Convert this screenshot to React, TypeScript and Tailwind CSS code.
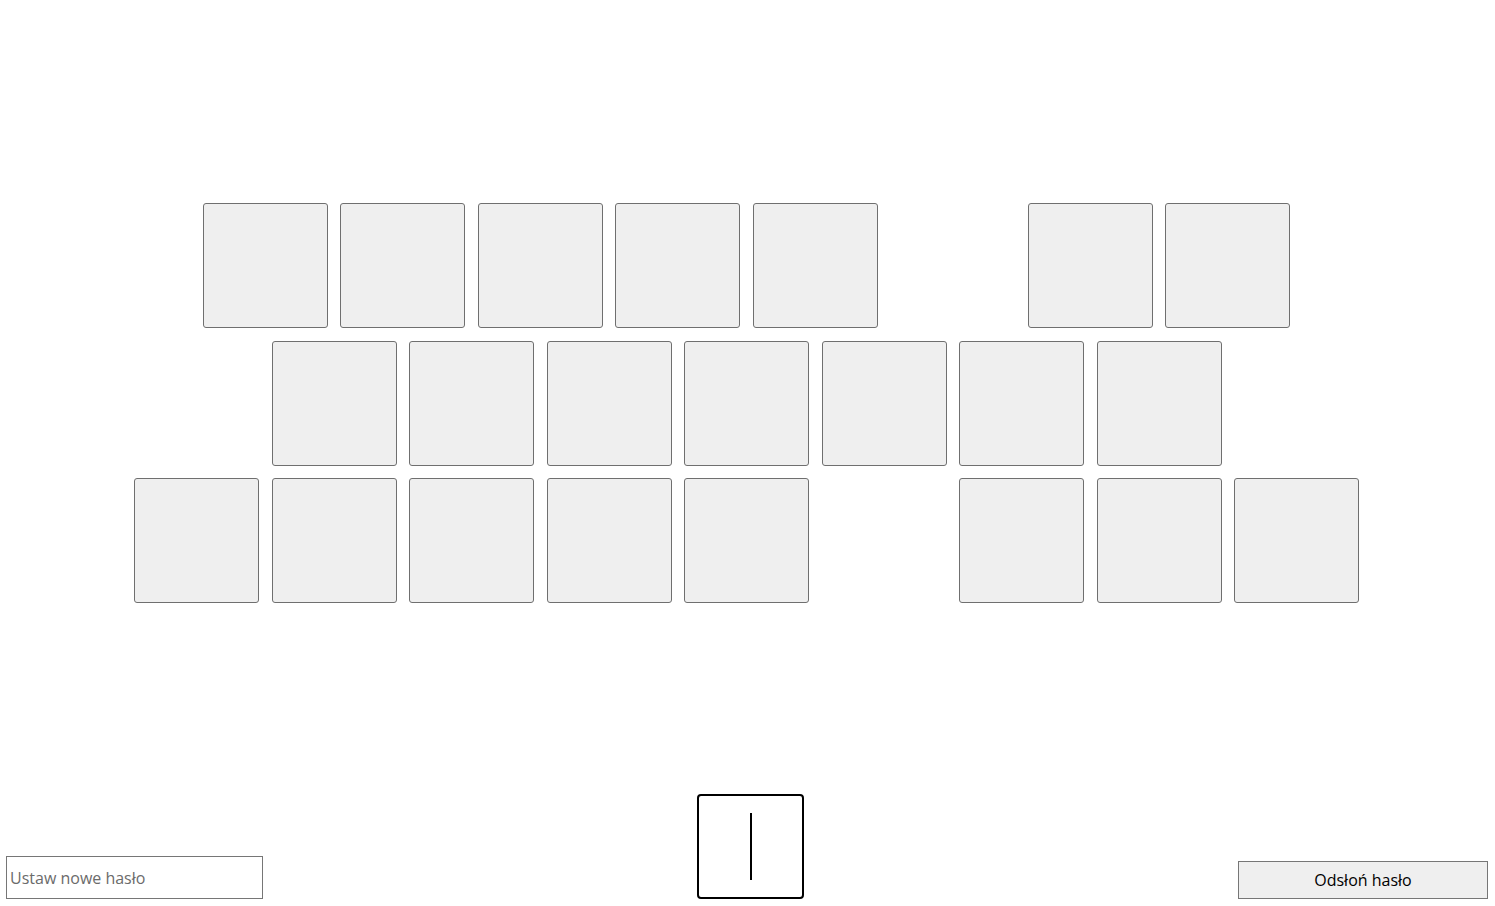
// plansza hasła: 1 = pole litery, 0 = odstęp między słowami
const rows = [
  [1, 1, 1, 1, 1, 0, 1, 1],
  [1, 1, 1, 1, 1, 1, 1],
  [1, 1, 1, 1, 1, 0, 1, 1, 1],
]

const App = () => {
  return (
    <div
      className="w-full h-[906px] bg-white flex flex-col justify-between"
      style={{ fontFamily: '"Open Sans", "Liberation Sans", sans-serif' }}
    >
      {/* plansza */}
      <div className="pt-[203px] pr-[2px] flex flex-col gap-[12.5px]">
        {rows.map((row, r) => (
          <div key={r} className="flex justify-center gap-[12.5px]">
            {row.map((cell, c) =>
              cell ? (
                <div
                  key={c}
                  className="w-[125px] h-[125px] bg-[#efefef] border border-[#6f6f6f] rounded-[3px]"
                />
              ) : (
                <div key={c} className="w-[125px] h-[125px]" />
              )
            )}
          </div>
        ))}
      </div>

      {/* dolny pasek */}
      <div className="relative flex items-end justify-between pl-[6px] pr-[7px] pb-[7px]">
        <input
          type="text"
          placeholder="Ustaw nowe hasło"
          className="w-[257px] h-[43px] border border-[#767676] px-[3px] text-[16px] text-black placeholder:text-[#6b6b6b] outline-none"
        />

        {/* pole na literę */}
        <div className="absolute left-[697px] bottom-[7px] w-[107px] h-[105px] border-2 border-black rounded-[4px] flex items-center justify-center">
          <div className="w-[2px] h-[67px] bg-black" />
        </div>

        <button className="w-[250px] h-[38px] bg-[#efefef] border-[1.5px] border-[#767676] text-[16px] text-black">
          Odsłoń hasło
        </button>
      </div>
    </div>
  )
}

export default App
